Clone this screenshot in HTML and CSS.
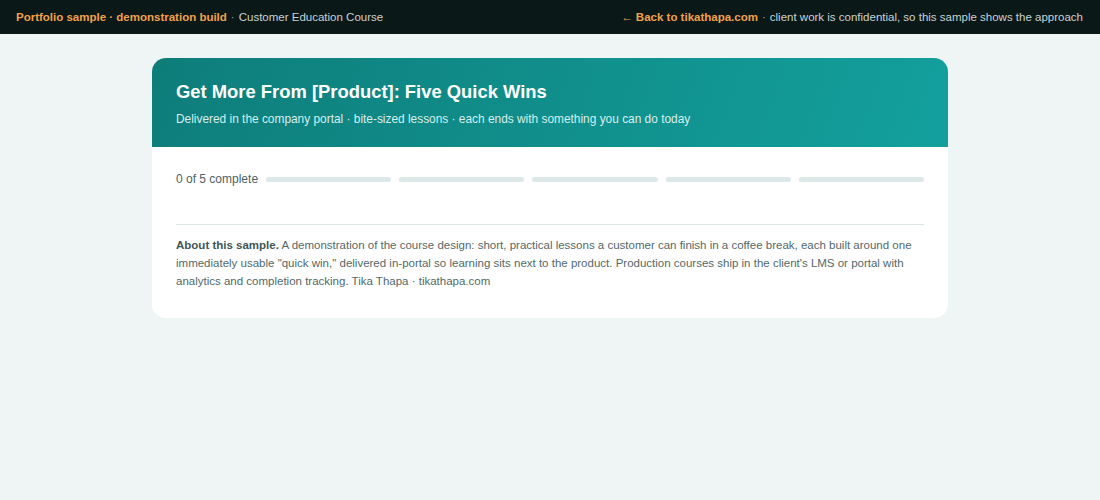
FILE: index.html
```html
<!DOCTYPE html>
<html lang="en">
<head>
<meta charset="utf-8">
<title>Customer Education Course</title>
<link rel="stylesheet" href="styles.css">
</head>
<body>
<header class="topbar">
  <div class="topbar-left">
    <span class="accent">Portfolio sample · demonstration build</span>
    <span class="sep">·</span>
    <span>Customer Education Course</span>
  </div>
  <div class="topbar-right">
    <a class="accent" href="#">← Back to tikathapa.com</a>
    <span class="sep">·</span>
    <span>client work is confidential, so this sample shows the approach</span>
  </div>
</header>

<main class="page">
  <section class="course">
    <div class="course-head">
      <h1>Get More From [Product]: Five Quick Wins</h1>
      <p>Delivered in the company portal · bite-sized lessons · each ends with something you can do today</p>
    </div>
    <div class="course-body">
      <div class="progress">
        <span class="progress-label">0 of 5 complete</span>
        <div class="progress-track">
          <span class="seg"></span>
          <span class="seg"></span>
          <span class="seg"></span>
          <span class="seg"></span>
          <span class="seg"></span>
        </div>
      </div>
      <div class="lessons"></div>
      <p class="about"><strong>About this sample.</strong> A demonstration of the course design: short, practical lessons a customer can finish in a coffee break, each built around one immediately usable "quick win," delivered in-portal so learning sits next to the product. Production courses ship in the client's LMS or portal with analytics and completion tracking. Tika Thapa · tikathapa.com</p>
    </div>
  </section>
</main>
</body>
</html>
```

FILE: styles.css
```css
* { box-sizing: border-box; }

html, body {
  margin: 0;
  padding: 0;
}

body {
  background: #eff5f5;
  font-family: "Liberation Sans", Arial, sans-serif;
  color: #4d6363;
  min-height: 500px;
}

.topbar {
  height: 34px;
  background: #0b1818;
  display: flex;
  align-items: center;
  justify-content: space-between;
  padding: 0 17px 0 16px;
  font-size: 11.5px;
  color: #c9d2d2;
}

.topbar-left, .topbar-right {
  display: flex;
  align-items: center;
  gap: 4px;
  white-space: nowrap;
}

.accent {
  color: #f0a148;
  font-weight: bold;
  text-decoration: none;
}

.sep { color: #9aa8a8; }

.page {
  padding-top: 24px;
  display: flex;
  justify-content: center;
}

.course {
  width: 796px;
  background: #ffffff;
  border-radius: 14px;
  overflow: hidden;
}

.course-head {
  background: linear-gradient(110deg, #0e7d7a 0%, #13a09d 100%);
  padding: 22px 24px 20px;
  color: #ffffff;
  height: 89px;
}

.course-head h1 {
  margin: 0;
  font-size: 18.4px;
  font-weight: bold;
  line-height: 24px;
}

.course-head p {
  margin: 6px 0 0;
  font-size: 11.9px;
  line-height: 18px;
  color: #d6efee;
}

.course-body {
  padding: 23px 24px 28px;
}

.progress {
  display: flex;
  align-items: center;
  gap: 8px;
  height: 18px;
}

.progress-label {
  font-size: 12px;
  color: #4d6363;
  white-space: nowrap;
}

.progress-track {
  flex: 1;
  display: flex;
  gap: 8px;
}

.seg {
  flex: 1;
  height: 5px;
  border-radius: 3px;
  background: #dde8e8;
}

.lessons {
  height: 37px;
  border-bottom: 1px solid #dde6e6;
}

.about {
  margin: 11px 0 0;
  font-size: 11.5px;
  line-height: 18px;
  color: #52696a;
}

.about strong {
  color: #405656;
}
```
